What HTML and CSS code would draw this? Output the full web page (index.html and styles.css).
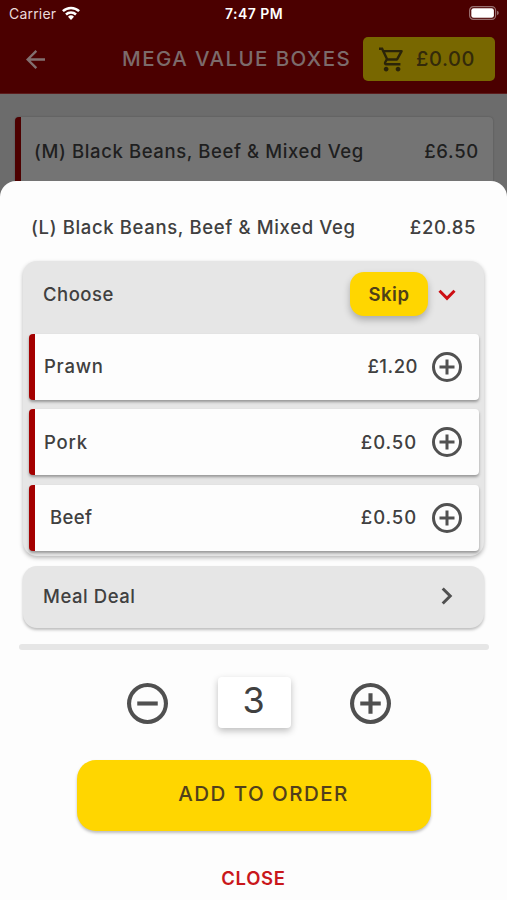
FILE: index.html
```html
<!DOCTYPE html>
<html lang="en">
<head>
<meta charset="utf-8">
<title>Mega Value Boxes</title>
<link rel="stylesheet" href="styles.css">
</head>
<body>
<svg class="defs" aria-hidden="true">
  <symbol id="plus" viewBox="0 0 20 20"><path d="M9 5h2v4h4v2h-4v4H9v-4H5V9h4z"/><path fill-rule="evenodd" d="M10 0a10 10 0 1 0 0 20 10 10 0 0 0 0-20zm0 18a8 8 0 1 1 0-16 8 8 0 0 1 0 16z"/></symbol>
  <symbol id="minus" viewBox="0 0 20 20"><path d="M5 9h10v2H5z"/><path fill-rule="evenodd" d="M10 0a10 10 0 1 0 0 20 10 10 0 0 0 0-20zm0 18a8 8 0 1 1 0-16 8 8 0 0 1 0 16z"/></symbol>
</svg>
<div class="screen">
  <header class="header">
    <div class="status">
      <div class="carrier"><span class="carrier-name">Carrier</span>
        <svg class="wifi" viewBox="0 0 18 14"><g fill="none" stroke="#fff" stroke-width="2.5"><path d="M.9 5.2a11.6 11.6 0 0 1 16.2 0"/><path d="M4 8.5a7.2 7.2 0 0 1 10 0"/></g><path fill="#fff" d="M9 14l-3-3.200a4.300 4.300 0 0 1 6 0z"/></svg>
      </div>
      <span class="time">7:47 PM</span>
      <svg class="battery" viewBox="0 0 30 14"><rect x=".6" y=".6" width="26" height="12.800" rx="3.800" fill="none" stroke="#986f6f" stroke-width="1.200"/><rect x="2.300" y="2.300" width="22.600" height="9.400" rx="2.300" fill="#fff"/><path d="M28 4.800q1.800.6 1.800 2.200T28 9.200z" fill="#986f6f"/></svg>
    </div>
    <div class="nav">
      <svg class="back" viewBox="4 4 16 16"><path d="M20 11H7.830l5.590-5.590L12 4l-8 8 8 8 1.410-1.410L7.830 13H20v-2z"/></svg>
      <h1 class="title">MEGA VALUE BOXES</h1>
      <div class="basket">
        <svg class="cart" viewBox="1 2 21 20"><path d="M15.550 13c.75 0 1.410-.41 1.750-1.030l3.580-6.490A.996.996 0 0 0 20.010 4H5.210l-.94-2H1v2h2l3.600 7.590-1.350 2.440C4.520 15.370 5.480 17 7 17h12v-2H7l1.100-2h7.450zM6.160 6h12.150l-2.760 5H8.530L6.160 6zM7 18c-1.100 0-1.990.9-1.990 2S5.900 22 7 22s2-.9 2-2-.9-2-2-2zm10 0c-1.100 0-1.990.9-1.990 2s.89 2 1.990 2 2-.9 2-2-.9-2-2-2z"/></svg>
        <span class="total">£0.00</span>
      </div>
    </div>
  </header>
  <div class="menu-item"><span class="name-m">(M) Black Beans, Beef &amp; Mixed Veg</span><span class="price-m">£6.50</span></div>

  <section class="sheet">
    <div class="product"><span class="name-l">(L) Black Beans, Beef &amp; Mixed Veg</span><span class="price-l">£20.85</span></div>
    <div class="group">
      <div class="group-head">
        <span class="choose">Choose</span>
        <button class="skip">Skip</button>
        <svg class="chevron-down" viewBox="0 0 18 12"><path d="M1.500 1.800L9 9.300l7.500-7.500"/></svg>
      </div>
      <div class="option"><span class="prawn">Prawn</span><span class="cost first">£1.20</span><svg class="add"><use href="#plus"/></svg></div>
      <div class="option"><span class="pork">Pork</span><span class="cost">£0.50</span><svg class="add"><use href="#plus"/></svg></div>
      <div class="option"><span class="beef">Beef</span><span class="cost">£0.50</span><svg class="add"><use href="#plus"/></svg></div>
    </div>
    <div class="meal"><span class="meal-name">Meal Deal</span><svg class="chevron-right" viewBox="0 0 12 18"><path d="M1.700 1.500L9.200 9l-7.500 7.500"/></svg></div>
    <div class="divider"></div>
    <div class="quantity">
      <svg class="step"><use href="#minus"/></svg>
      <div class="count">3</div>
      <svg class="step"><use href="#plus"/></svg>
    </div>
    <button class="order">ADD TO ORDER</button>
    <button class="close">CLOSE</button>
  </section>
</div>
</body>
</html>
```

FILE: styles.css
```css
* { box-sizing: border-box; }
body { margin: 0; }
button { border: 0; padding: 0; font: inherit; color: inherit; background: none; }
.defs { display: none; }
svg { display: block; flex: none; }

.screen {
  position: relative;
  width: 507px;
  height: 900px;
  overflow: hidden;
  background: #6c6c6c;
  font-family: Inter, "Liberation Sans", sans-serif;
  font-size: 18.5px;
  font-weight: 450;
  line-height: 24px;
  color: #404040;
  white-space: nowrap;
}

/* Dimmed page behind the sheet */
.header { height: 94px; background: #4b0000; border-bottom: 1px solid #5d1c1c; }
.status {
  height: 27px;
  display: grid;
  grid-template-columns: 1fr auto 1fr;
  align-items: center;
  padding: 0 8px 0 9px;
  color: #fff;
  font-size: 14px;
}
.carrier { display: flex; align-items: center; gap: 6px; color: #eadada; }
.carrier-name { font-weight: 400; letter-spacing: .2px; }
.wifi { width: 18px; height: 14px; margin-top: -1px; }
.time { font-weight: 600; font-size: 14px; letter-spacing: .45px; }
.battery { width: 30px; height: 14px; margin-top: -1px; justify-self: end; }
.nav { height: 66px; display: flex; align-items: center; padding: 0 12px 0 26px; }
.back { width: 19px; height: 19px; margin-bottom: 2px; fill: #827070; }
.title {
  width: 232px;
  margin: 0 0 2px 77px;
  font-size: 20.5px;
  font-weight: 500;
  letter-spacing: 1.42px;
  color: #7c6b6b;
}
.basket {
  width: 132px;
  height: 44px;
  margin: 0 0 2px auto;
  display: flex;
  align-items: center;
  padding-left: 16px;
  border-radius: 5px;
  background: #786700;
  color: #332a0a;
}
.cart { width: 25px; height: 25px; fill: #2b2409; }
.total { margin-left: 12px; font-size: 20px; letter-spacing: .6px; }
.menu-item {
  height: 80px;
  margin: 23px 14px 0 15px;
  padding: 22px 14px 0 13px;
  display: flex;
  justify-content: space-between;
  border-left: 6px solid #4d0000;
  border-radius: 4px;
  background: #747474;
  box-shadow: 0 0 2px rgba(0, 0, 0, .25);
  color: #1f1f1f;
}
.name-m { letter-spacing: .6px; }
.price-m { letter-spacing: .7px; }

/* Product sheet */
.sheet {
  position: absolute;
  inset: 181px 0 0;
  display: flex;
  flex-direction: column;
  border-radius: 16px 16px 0 0;
  background: #fdfdfd;
}
.product { height: 80px; padding: 34px 31px 0; display: flex; justify-content: space-between; }
.name-l { letter-spacing: .64px; }
.price-l { letter-spacing: .6px; }
.group {
  height: 295px;
  margin: 0 23px;
  padding: 0 5px 0 6px;
  display: flex;
  flex-direction: column;
  gap: 9.500px;
  border-radius: 14px;
  background: #e6e6e6;
  box-shadow: 0 2px 4px rgba(0, 0, 0, .28);
}
.group-head {
  height: 63.400px;
  display: flex;
  align-items: center;
  padding: 3px 23px 0 14px;
}
.choose { letter-spacing: .5px; }
.skip {
  width: 78px;
  height: 44px;
  margin: 0 10px 0 auto;
  border-radius: 14px;
  background: #ffd600;
  box-shadow: 0 4px 7px rgba(0, 0, 0, .25);
  color: #4f4018;
  font-weight: 600;
  letter-spacing: .5px;
}
.chevron-down { width: 18px; height: 12px; margin-top: 2px; }
.chevron-down path { fill: none; stroke: #cd0e13; stroke-width: 3; }
.option {
  height: 66px;
  display: flex;
  align-items: center;
  padding: 0 17px 0 9px;
  border-left: 6px solid #a40000;
  border-radius: 4px;
  background: #fdfdfd;
  box-shadow: 0 2px 3px rgba(0, 0, 0, .35);
}
.option span { padding-bottom: 1px; }
.prawn { letter-spacing: .75px; }
.pork { letter-spacing: .8px; }
.beef { margin-left: 6px; letter-spacing: .4px; }
.cost { margin-left: auto; margin-right: 15px; letter-spacing: .9px; }
.cost.first { margin-right: 14px; letter-spacing: .5px; }
.add { width: 30px; height: 30px; fill: #515151; }
.meal {
  height: 62px;
  margin: 10px 23px 0;
  display: flex;
  align-items: center;
  justify-content: space-between;
  padding: 0 31px 2px 20px;
  border-radius: 14px;
  background: #e6e6e6;
  box-shadow: 0 2px 3px rgba(0, 0, 0, .25);
}
.meal-name { letter-spacing: .55px; }
.chevron-right { width: 12px; height: 18px; }
.chevron-right path { fill: none; stroke: #505050; stroke-width: 3; }
.divider { height: 6px; margin: 16px 18px 0 19px; border-radius: 3px; background: #e6e6e6; }
.quantity {
  height: 53px;
  margin-top: 27px;
  padding: 0 116px 0 127px;
  display: flex;
  align-items: center;
  justify-content: space-between;
}
.step { width: 41px; height: 41px; fill: #505050; }
.count {
  width: 73px;
  height: 51px;
  margin: 0 0 2px -9px;
  padding-right: 2px;
  border-radius: 4px;
  background: #fff;
  box-shadow: 0 3px 7px rgba(0, 0, 0, .25);
  text-align: center;
  font-size: 36px;
  font-weight: 400;
  line-height: 47px;
}
.order {
  height: 71px;
  margin: 30px 76px 0 77px;
  padding: 0 0 3px 19px;
  border-radius: 19px;
  background: #ffd600;
  box-shadow: 0 2px 3px rgba(0, 0, 0, .25);
  color: #51401b;
  font-size: 20.5px;
  font-weight: 550;
  letter-spacing: 1.45px;
}
.close {
  margin-top: 35px;
  color: #c9171b;
  font-size: 18.5px;
  font-weight: 600;
  letter-spacing: .7px;
}
```
